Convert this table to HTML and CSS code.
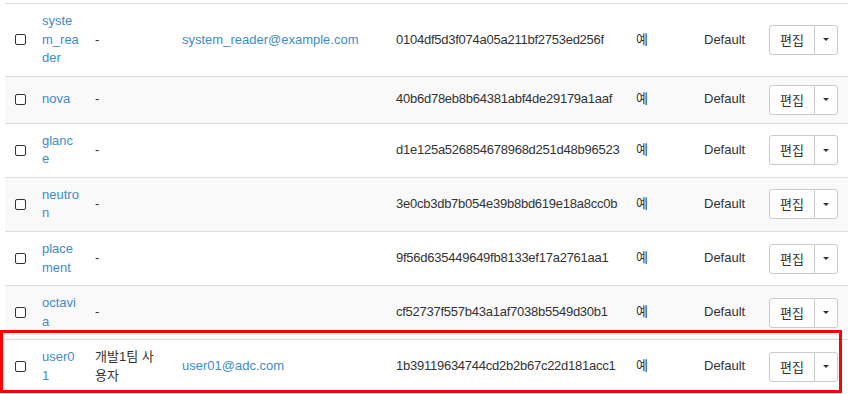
FILE: index.html
```html
<!DOCTYPE html>
<html lang="ko">
<head>
  <meta charset="UTF-8" />
  <title>사용자</title>
  <link rel="stylesheet" href="styles.css">
</head>
<body>
  <div class="page">
    <table class="users">
      <colgroup>
        <col class="c-check" />
        <col class="c-name" />
        <col class="c-desc" />
        <col class="c-email" />
        <col class="c-id" />
        <col class="c-enabled" />
        <col class="c-domain" />
        <col class="c-actions" />
      </colgroup>
      <tbody>
        <tr>
          <td><input type="checkbox" class="row-check" /></td>
          <td><a href="#">system_reader</a></td>
          <td class="desc">-</td>
          <td><a href="#">system_reader@example.com</a></td>
          <td class="uid">0104df5d3f074a05a211bf2753ed256f</td>
          <td>예</td>
          <td>Default</td>
          <td><div class="btn-group"><button class="btn">편집</button><button class="btn toggle"><span class="caret"></span></button></div></td>
        </tr>
        <tr>
          <td><input type="checkbox" class="row-check" /></td>
          <td><a href="#">nova</a></td>
          <td class="desc">-</td>
          <td></td>
          <td class="uid">40b6d78eb8b64381abf4de29179a1aaf</td>
          <td>예</td>
          <td>Default</td>
          <td><div class="btn-group"><button class="btn">편집</button><button class="btn toggle"><span class="caret"></span></button></div></td>
        </tr>
        <tr>
          <td><input type="checkbox" class="row-check" /></td>
          <td><a href="#">glance</a></td>
          <td class="desc">-</td>
          <td></td>
          <td class="uid">d1e125a526854678968d251d48b96523</td>
          <td>예</td>
          <td>Default</td>
          <td><div class="btn-group"><button class="btn">편집</button><button class="btn toggle"><span class="caret"></span></button></div></td>
        </tr>
        <tr>
          <td><input type="checkbox" class="row-check" /></td>
          <td><a href="#">neutron</a></td>
          <td class="desc">-</td>
          <td></td>
          <td class="uid">3e0cb3db7b054e39b8bd619e18a8cc0b</td>
          <td>예</td>
          <td>Default</td>
          <td><div class="btn-group"><button class="btn">편집</button><button class="btn toggle"><span class="caret"></span></button></div></td>
        </tr>
        <tr>
          <td><input type="checkbox" class="row-check" /></td>
          <td><a href="#">placement</a></td>
          <td class="desc">-</td>
          <td></td>
          <td class="uid">9f56d635449649fb8133ef17a2761aa1</td>
          <td>예</td>
          <td>Default</td>
          <td><div class="btn-group"><button class="btn">편집</button><button class="btn toggle"><span class="caret"></span></button></div></td>
        </tr>
        <tr>
          <td><input type="checkbox" class="row-check" /></td>
          <td><a href="#">octavia</a></td>
          <td class="desc">-</td>
          <td></td>
          <td class="uid">cf52737f557b43a1af7038b5549d30b1</td>
          <td>예</td>
          <td>Default</td>
          <td><div class="btn-group"><button class="btn">편집</button><button class="btn toggle"><span class="caret"></span></button></div></td>
        </tr>
        <tr>
          <td><input type="checkbox" class="row-check" /></td>
          <td><a href="#">user01</a></td>
          <td class="desc">개발1팀 사용자</td>
          <td><a href="#">user01@adc.com</a></td>
          <td class="uid">1b39119634744cd2b2b67c22d181acc1</td>
          <td>예</td>
          <td>Default</td>
          <td><div class="btn-group"><button class="btn">편집</button><button class="btn toggle"><span class="caret"></span></button></div></td>
        </tr>
      </tbody>
    </table>
    <div class="highlight"></div>
  </div>
</body>
</html>
```

FILE: styles.css
```css
body {
  margin: 0;
  background: #fff;
  font-family: "Liberation Sans", Arial, "Noto Sans CJK KR", sans-serif;
  font-size: 13px;
  line-height: 18.57px;
  color: #333;
}

.page {
  position: relative;
  padding: 3px 0 0 5px;
  overflow: hidden;
}

.users {
  width: 843px;
  table-layout: fixed;
  border-collapse: collapse;
}

.c-check { width: 29px; }
.c-name { width: 53px; }
.c-desc { width: 87px; }
.c-email { width: 214px; }
.c-id { width: 240px; }
.c-enabled { width: 68px; }
.c-domain { width: 65px; }
.c-actions { width: 87px; }

.users td {
  padding: 8px;
  border-top: 1px solid #ddd;
  vertical-align: middle;
  word-break: break-all;
  white-space: normal;
}

.users td.desc {
  padding-right: 19px;
}

.users td.uid {
  white-space: nowrap;
  letter-spacing: -0.25px;
}

.users tr:nth-child(even) td {
  background: #f9f9f9;
}

.users a {
  color: #428bca;
  text-decoration: none;
}

.row-check {
  appearance: none;
  -webkit-appearance: none;
  display: block;
  width: 11px;
  height: 11px;
  margin: 0 0 0 2px;
  border: 1.5px solid #333;
  border-radius: 2px;
  background: #fff;
}

.btn-group {
  display: flex;
}

.btn {
  font-family: "Noto Sans CJK KR", "Liberation Sans", sans-serif;
  font-size: 13px;
  line-height: 18px;
  height: 30px;
  padding: 5px 10px;
  color: #333;
  background: #fff;
  border: 1px solid #ccc;
  border-radius: 3px 0 0 3px;
}

.btn.toggle {
  margin-left: -1px;
  padding: 5px 8px;
  border-radius: 0 3px 3px 0;
  display: flex;
  align-items: center;
}

.caret {
  display: block;
  width: 0;
  height: 0;
  border-top: 3px solid #333;
  border-left: 3px solid transparent;
  border-right: 3px solid transparent;
}

.highlight {
  position: absolute;
  left: 0;
  top: 330px;
  width: 836px;
  height: 57px;
  border: 3px solid #f00;
  pointer-events: none;
}
```
